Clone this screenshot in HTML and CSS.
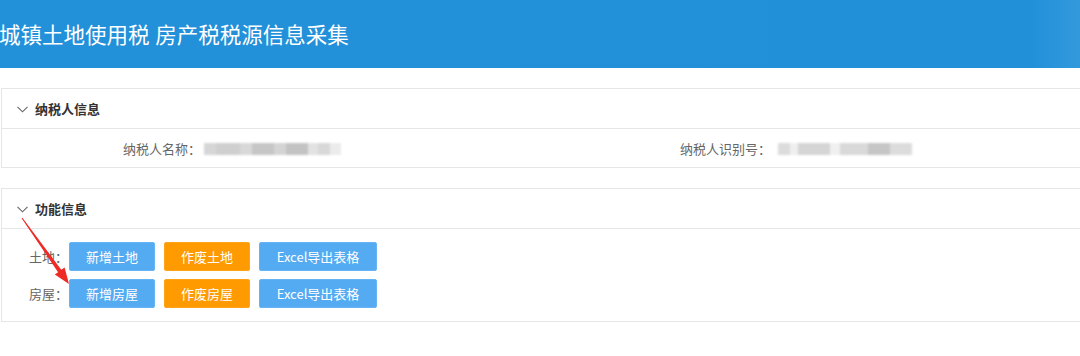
FILE: index.html
```html
<!DOCTYPE html>
<html lang="zh-CN">
<head>
    <meta charset="UTF-8">
    <meta name="viewport" content="width=device-width, initial-scale=1.0">
    <title>城镇土地使用税 房产税税源信息采集</title>
    <link rel="stylesheet" href="styles.css">
</head>
<body>
    <div class="header">
        <h1 class="title">城镇土地使用税 房产税税源信息采集</h1>
    </div>

    <div class="panel">
        <div class="panel-head">
            <svg class="chevron" width="11" height="7" viewBox="0 0 11 7"><polyline points="0.5,0.8 5.5,5.8 10.5,0.8" fill="none" stroke="#666" stroke-width="1.1"/></svg>
            <span class="panel-title">纳税人信息</span>
        </div>
        <div class="panel-body info">
            <span class="label">纳税人名称：</span>
            <span class="masked m1"></span>
            <span class="label">纳税人识别号：</span>
            <span class="masked m2"></span>
        </div>
    </div>

    <div class="panel">
        <div class="panel-head">
            <svg class="chevron" width="11" height="7" viewBox="0 0 11 7"><polyline points="0.5,0.8 5.5,5.8 10.5,0.8" fill="none" stroke="#666" stroke-width="1.1"/></svg>
            <span class="panel-title">功能信息</span>
        </div>
        <div class="panel-body actions">
            <div class="row">
                <span class="row-label">土地：</span>
                <button class="btn blue">新增土地</button>
                <button class="btn orange">作废土地</button>
                <button class="btn blue">Excel导出表格</button>
            </div>
            <div class="row">
                <span class="row-label">房屋：</span>
                <button class="btn blue">新增房屋</button>
                <button class="btn orange">作废房屋</button>
                <button class="btn blue">Excel导出表格</button>
            </div>
        </div>
    </div>

    <!-- 标注箭头 -->
    <svg class="arrow" width="80" height="300" viewBox="0 0 80 300">
        <polygon points="21.6,218.3 58.1,272.2 54.8,274.5 69,284 64.6,267.5 61.3,269.8 22.4,217.7" fill="#ee2b24"/>
    </svg>
</body>
</html>
```

FILE: styles.css
```css
*{
    margin: 0;
    padding: 0;
    box-sizing: border-box;
}
body{
    width: 1080px;
    height: 356px;
    overflow: hidden;
    position: relative;
    background: #fff;
    font-family: "Microsoft YaHei", "Noto Sans CJK SC", sans-serif;
    font-size: 13px;
    color: #666;
}
.header{
    height: 68px;
    display: flex;
    align-items: center;
    background: linear-gradient(to right, #2391d9 0, #2190d8 1030px, #3399dd 1080px);
}
.title{
    font-size: 21.5px;
    font-weight: normal;
    color: #fff;
    margin-left: -1px;
    margin-top: -2px;
    word-spacing: 1px;
}
.panel{
    margin: 20px -10px 0 1px;
    border: 1px solid #e6e6e6;
}
.panel-head{
    height: 40px;
    display: flex;
    align-items: center;
    padding-left: 15px;
    border-bottom: 1px solid #e6e6e6;
}
.chevron{
    margin-right: 7px;
    margin-top: 1px;
}
.panel-title{
    font-weight: bold;
    color: #333;
}
.info{
    height: 38px;
    display: grid;
    grid-template-columns: 199px 377px 193px 1fr;
    align-items: center;
}
.label{
    text-align: right;
}
.masked{
    display: block;
    height: 12px;
    margin-top: 1px;
    filter: blur(1.2px);
}
.m1{
    width: 137px;
    margin-left: 3px;
    background: linear-gradient(to right, #d6d6d6 0 12px, #cfcfcf 12px 36px, #d8d8d8 36px 48px, #c6c6c6 48px 70px, #d4d4d4 70px 82px, #c3c3c3 82px 104px, #e2e2e2 104px 114px, #d8d8d8 114px 126px, #ececec 126px 137px);
}
.m2{
    width: 134px;
    margin-left: 7px;
    background: linear-gradient(to right, #dcdcdc 0 12px, #efefef 12px 20px, #d5d5d5 20px 52px, #f0f0f0 52px 62px, #d9d9d9 62px 90px, #c6c6c6 90px 112px, #dcdcdc 112px 134px);
}
.actions{
    padding: 13px 0 13px 27px;
    display: flex;
    flex-direction: column;
    gap: 8px;
}
.row{
    display: flex;
    align-items: center;
    gap: 9px;
}
.row-label{
    width: 31px;
    white-space: nowrap;
}
.btn{
    height: 29px;
    padding: 0 16px;
    border: 1px solid transparent;
    border-radius: 2px;
    font-family: inherit;
    font-size: 13px;
    color: #fff;
    cursor: pointer;
}
.blue{
    background: #55abf2;
    border-color: #66b4f3;
}
.orange{
    background: #ff9b00;
    border-color: #ffa41a;
}
.row .btn:nth-child(2),
.row .btn:nth-child(3){
    width: 86px;
}
.row .btn:nth-child(4){
    width: 118px;
}
.arrow{
    position: absolute;
    left: 0;
    top: 0;
}
```
